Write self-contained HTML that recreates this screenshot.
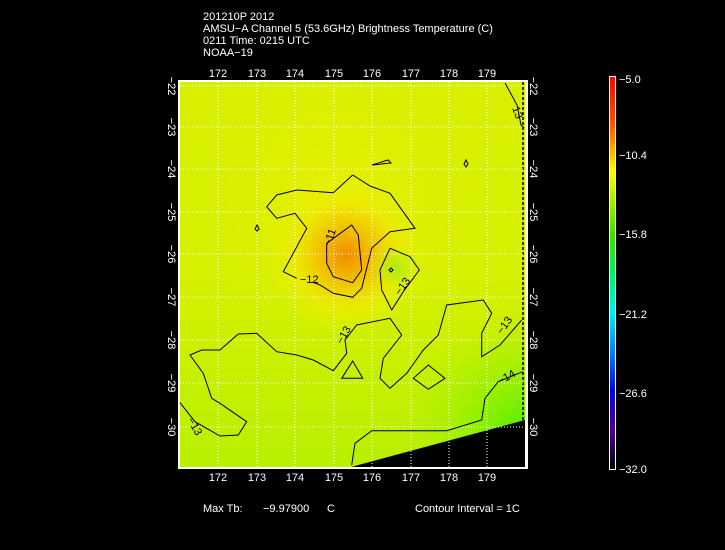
<!DOCTYPE html>
<html><head><meta charset="utf-8"><style>
html,body{margin:0;padding:0;background:#000;width:725px;height:550px;overflow:hidden}
svg{display:block}
text{font-family:"Liberation Sans",sans-serif;fill:#fff;font-size:11px}
</style></head><body>
<svg width="725" height="550" viewBox="0 0 725 550" xmlns="http://www.w3.org/2000/svg">
<defs>
<radialGradient id="hot" cx="346" cy="255" r="80" gradientUnits="userSpaceOnUse">
<stop offset="0" stop-color="#f08c00"/><stop offset="0.3" stop-color="#f5b800" stop-opacity="0.95"/><stop offset="0.65" stop-color="#f0e800" stop-opacity="0.7"/><stop offset="1" stop-color="#f0f000" stop-opacity="0"/>
</radialGradient>
<radialGradient id="yel" cx="340" cy="200" r="140" gradientUnits="userSpaceOnUse">
<stop offset="0" stop-color="#ecf000" stop-opacity="0.8"/><stop offset="1" stop-color="#e0f000" stop-opacity="0"/>
</radialGradient>
<radialGradient id="grn" cx="530" cy="440" r="130" gradientUnits="userSpaceOnUse">
<stop offset="0" stop-color="#40f000"/><stop offset="0.4" stop-color="#80f000" stop-opacity="0.8"/><stop offset="1" stop-color="#b0f000" stop-opacity="0"/>
</radialGradient>
<radialGradient id="g2" cx="395" cy="268" r="25" gradientUnits="userSpaceOnUse">
<stop offset="0" stop-color="#a8ec20"/><stop offset="1" stop-color="#c8f000" stop-opacity="0"/>
</radialGradient>
<linearGradient id="bg" x1="0" y1="0" x2="0" y2="1">
<stop offset="0" stop-color="#d8f000"/><stop offset="0.5" stop-color="#d6f000"/><stop offset="1" stop-color="#b8f000"/>
</linearGradient>
<linearGradient id="cb" x1="0" y1="0" x2="0" y2="1">
<stop offset="0" stop-color="#ff0000"/><stop offset="0.12" stop-color="#ff5000"/><stop offset="0.2" stop-color="#ffc000"/><stop offset="0.24" stop-color="#ffff00"/><stop offset="0.4" stop-color="#40e000"/><stop offset="0.5" stop-color="#00f060"/><stop offset="0.6" stop-color="#00f0f0"/><stop offset="0.7" stop-color="#0080ff"/><stop offset="0.8" stop-color="#0000f0"/><stop offset="0.9" stop-color="#500090"/><stop offset="1" stop-color="#000000"/>
</linearGradient>
</defs>
<text x="203" y="20">201210P 2012</text>
<text x="203" y="32">AMSU−A Channel 5 (53.6GHz) Brightness Temperature (C)</text>
<text x="203" y="44">0211 Time: 0215 UTC</text>
<text x="203" y="56">NOAA−19</text>

<rect x="178" y="80" width="350" height="389" fill="#fff"/>
<rect x="180" y="82" width="345" height="385" fill="url(#bg)"/>
<rect x="180" y="82" width="345" height="385" fill="url(#yel)"/>
<rect x="180" y="82" width="345" height="385" fill="url(#grn)"/>
<rect x="180" y="82" width="345" height="385" fill="url(#hot)"/>
<rect x="180" y="82" width="345" height="385" fill="url(#g2)"/>
<polygon points="351,467 525,420 525,467" fill="#000"/>
<line x1="523" y1="82" x2="523" y2="420" stroke="#000" stroke-dasharray="3,2" stroke-width="1.5"/>

<g stroke="#fff" stroke-dasharray="1,2" stroke-width="1">
<line x1="218" y1="82" x2="218" y2="467"/><line x1="257" y1="82" x2="257" y2="467"/><line x1="295" y1="82" x2="295" y2="467"/><line x1="334" y1="82" x2="334" y2="467"/><line x1="372" y1="82" x2="372" y2="467"/><line x1="411" y1="82" x2="411" y2="467"/><line x1="449" y1="82" x2="449" y2="467"/><line x1="487" y1="82" x2="487" y2="467"/>
<line x1="180" y1="86" x2="525" y2="86"/><line x1="180" y1="127" x2="525" y2="127"/><line x1="180" y1="169" x2="525" y2="169"/><line x1="180" y1="212" x2="525" y2="212"/><line x1="180" y1="254" x2="525" y2="254"/><line x1="180" y1="297" x2="525" y2="297"/><line x1="180" y1="340" x2="525" y2="340"/><line x1="180" y1="383" x2="525" y2="383"/><line x1="180" y1="427" x2="525" y2="427"/>
</g>

<g fill="none" stroke="#000" stroke-width="1">
<polyline points="352.7,175 370,186 390,193.3 415,228.3 390,231.7 371.7,248.3 361.7,288.3 352.7,297.3 333.3,293.3 320,285 312,282"/>
<polyline points="296.7,278.3 283.3,271.7 306.7,228.3 295,213.3 276.7,218.3 266.7,206.7 276.7,195 296.7,190 333.3,192.7 352.7,175"/>
<polyline points="326.7,243.3 351.7,225 358.3,235 361.7,270 352.7,282.7 333.3,276.7 326.7,263.3 326.7,243.3"/>
<polyline points="390,248.3 410,256.7 419.3,270 403.3,291.7 391.7,310 381.7,290 380,270 390,248.3"/>
<polyline points="180,402.7 195,421.7 220,436 238.3,435 246.7,421.7 220,403.3 211.7,398.3 203.3,373.3 190,355 201.7,350 220,350 238.3,334 256.7,333.3 276.7,351.7 296.7,355 313.3,360 333.3,370.7 346.7,353.3 345,340 356.7,325 390,318.3 401.7,335 383.3,358.3 380,378.3 390,388.3 406.7,373.3 423.3,350 438.3,335 446.7,305 483.3,300 491.7,313.3 481.7,333.3 481.7,356.7 500,345 521.7,320"/>
<polygon points="352.7,361 362.7,378.3 341.7,378.3"/>
<polygon points="428.3,365 445,378.3 428.3,389.3 413.3,378.3"/>
<polyline points="522.7,371.7 498.3,381.7 485,398.3 481.7,420 446.7,430.7 371.7,430.7 355,443.3 351.7,465"/>
<polyline points="505,83 517,105 521,125 524,128"/>
<polyline points="372,165 388,160 391,163 372,165"/>
<polygon points="466,160 468,164 466,167 464,164"/>
<polygon points="257,225 259,229 257,231 255,229"/>
<polygon points="391,268 393,270 391,272 389,270"/>
</g>
<g style="font-size:10px" fill="#000">
<text x="300" y="283" style="fill:#000">−12</text>
<text transform="translate(330,247) rotate(-70)" style="fill:#000">−11</text>
<text transform="translate(400,296) rotate(-55)" style="fill:#000">−13</text>
<text transform="translate(342,345) rotate(-60)" style="fill:#000">−13</text>
<text transform="translate(502,335) rotate(-55)" style="fill:#000">−13</text>
<text transform="translate(500,385) rotate(-30)" style="fill:#000">−14</text>
<text transform="translate(187,420) rotate(60)" style="fill:#000">−13</text>
<text transform="translate(512,108) rotate(70)" style="fill:#000">13</text>
</g>

<g text-anchor="middle">
<text x="218" y="77">172</text><text x="257" y="77">173</text><text x="295" y="77">174</text><text x="334" y="77">175</text><text x="372" y="77">176</text><text x="411" y="77">177</text><text x="449" y="77">178</text><text x="487" y="77">179</text>
<text x="218" y="481">172</text><text x="257" y="481">173</text><text x="295" y="481">174</text><text x="334" y="481">175</text><text x="372" y="481">176</text><text x="411" y="481">177</text><text x="449" y="481">178</text><text x="487" y="481">179</text>
</g>
<g text-anchor="middle">
<text transform="translate(168,86) rotate(90)">−22</text><text transform="translate(168,127) rotate(90)">−23</text><text transform="translate(168,169) rotate(90)">−24</text><text transform="translate(168,212) rotate(90)">−25</text><text transform="translate(168,254) rotate(90)">−26</text><text transform="translate(168,297) rotate(90)">−27</text><text transform="translate(168,340) rotate(90)">−28</text><text transform="translate(168,383) rotate(90)">−29</text><text transform="translate(168,427) rotate(90)">−30</text>
<text transform="translate(530,86) rotate(90)">−22</text><text transform="translate(530,127) rotate(90)">−23</text><text transform="translate(530,169) rotate(90)">−24</text><text transform="translate(530,212) rotate(90)">−25</text><text transform="translate(530,254) rotate(90)">−26</text><text transform="translate(530,297) rotate(90)">−27</text><text transform="translate(530,340) rotate(90)">−28</text><text transform="translate(530,383) rotate(90)">−29</text><text transform="translate(530,427) rotate(90)">−30</text>
</g>

<rect x="609.5" y="76.5" width="6" height="393" fill="url(#cb)" stroke="#fff" stroke-width="1"/>
<text x="619" y="83">−5.0</text>
<text x="619" y="159">−10.4</text>
<text x="619" y="238">−15.8</text>
<text x="619" y="318">−21.2</text>
<text x="619" y="397">−26.6</text>
<text x="619" y="473">−32.0</text>

<text x="203" y="512">Max Tb:</text>
<text x="263" y="512">−9.97900</text>
<text x="327" y="512">C</text>
<text x="415" y="512">Contour Interval = 1C</text>
</svg>
</body></html>
